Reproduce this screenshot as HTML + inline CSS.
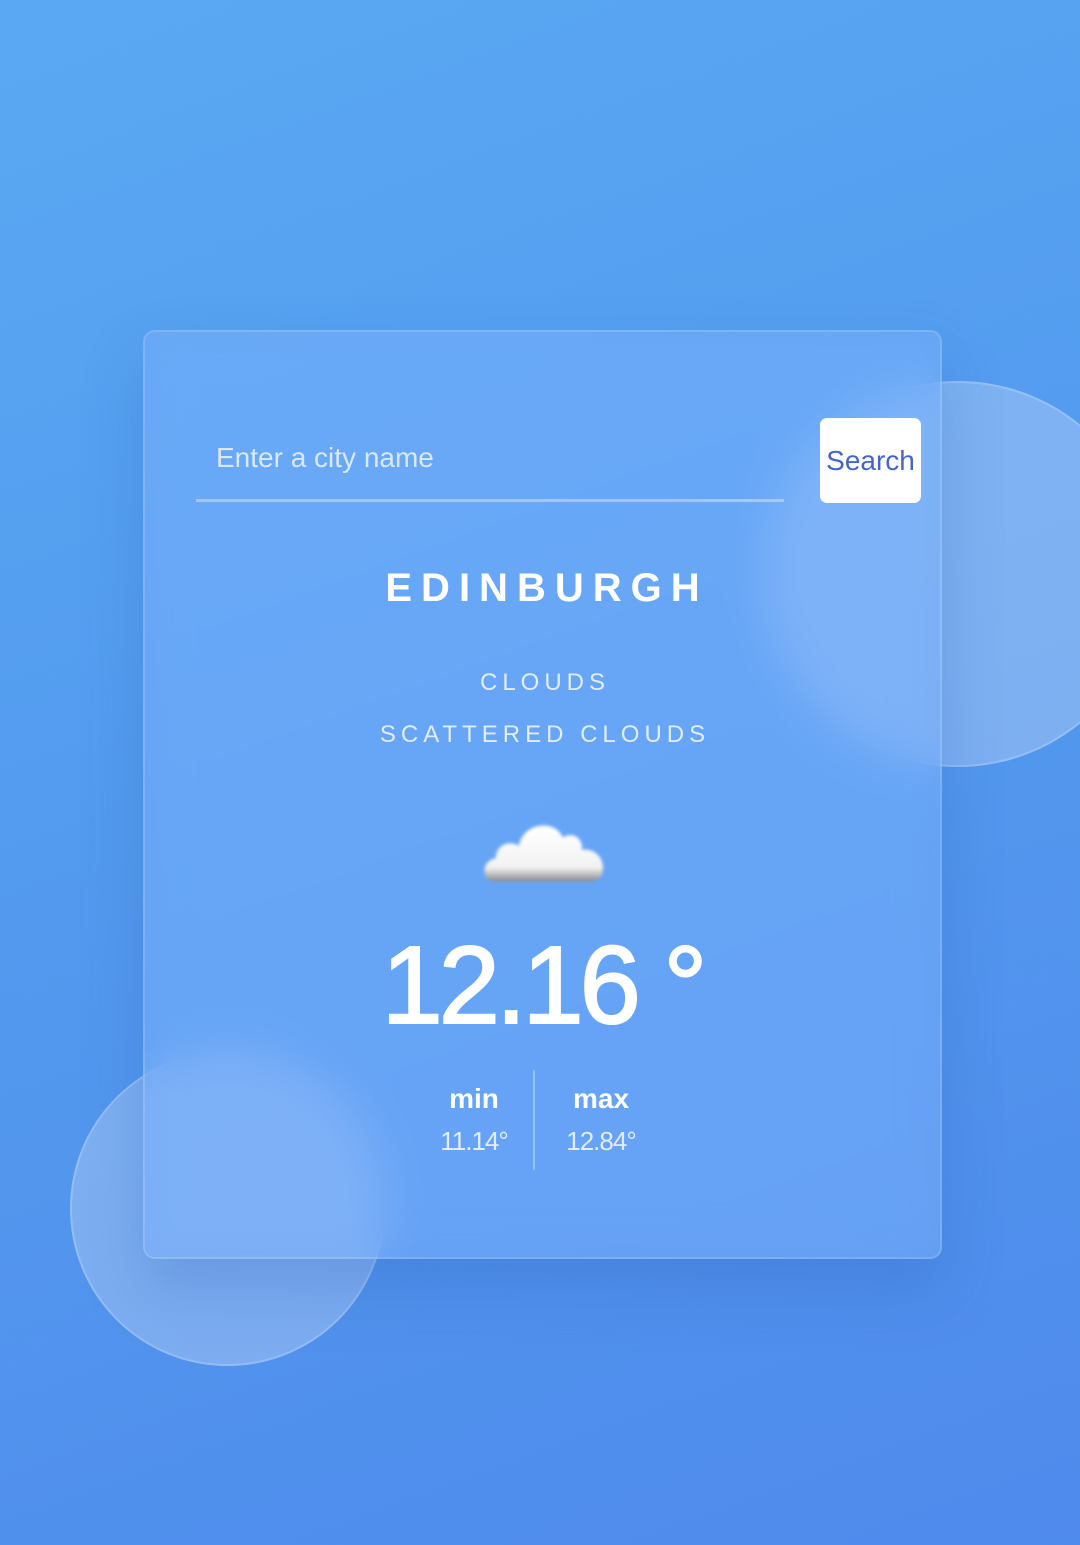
<!DOCTYPE html>
<html><head><meta charset="utf-8"><style>
*{margin:0;padding:0;box-sizing:border-box}
html,body{width:1080px;height:1545px;overflow:hidden}
body{background:linear-gradient(160deg,#5aa8f3 0%,#539bef 45%,#4f8aec 100%);font-family:"Liberation Sans",sans-serif;position:relative}
.c{position:absolute;border-radius:50%;background:rgba(185,210,245,0.42);border:2px solid rgba(255,255,255,0.18)}
.card{position:absolute;left:143px;top:330px;width:799px;height:929px;border-radius:12px;background:rgba(120,172,244,0.5);backdrop-filter:blur(22px) brightness(1.04);-webkit-backdrop-filter:blur(22px);border:2px solid rgba(255,255,255,0.15);box-shadow:0 30px 60px rgba(40,90,180,0.25)}
.in{position:absolute;left:-2px;top:-2px;width:799px;height:929px}
.t{position:absolute;left:0;width:799px;text-align:center;color:#fff}
</style></head><body>
<div class="c" style="left:765px;top:381px;width:386px;height:386px"></div>
<div class="c" style="left:70px;top:1051px;width:315px;height:315px"></div>
<div class="card"><div class="in">
  <div style="position:absolute;left:73px;top:112px;font-size:28px;color:#dbe8fa;font-weight:300">Enter a city name</div>
  <div style="position:absolute;left:53px;top:169px;width:588px;height:3px;background:rgba(200,220,250,0.6)"></div>
  <div style="position:absolute;left:677px;top:88px;width:101px;height:85px;background:#fff;border-radius:7px;color:#4565cc;font-size:28px;display:flex;align-items:center;justify-content:center">Search</div>
  <div class="t" style="top:236px;font-size:40px;font-weight:bold;letter-spacing:9px;text-indent:9px">EDINBURGH</div>
  <div class="t" style="top:339px;font-size:24px;letter-spacing:5px;text-indent:5px;color:#e2ecfa">CLOUDS</div>
  <div class="t" style="top:391px;font-size:24px;letter-spacing:5px;text-indent:5px;color:#e2ecfa">SCATTERED CLOUDS</div>
  <svg style="position:absolute;left:336px;top:484px" width="130" height="76" viewBox="0 0 124 72">
    <defs><filter id="b"><feGaussianBlur stdDeviation="1.5"/></filter>
    <linearGradient id="g" x1="0" y1="0" x2="0" y2="1"><stop offset="0" stop-color="#fff"/><stop offset="0.75" stop-color="#f2f2f2"/><stop offset="1" stop-color="#8a8a8a"/></linearGradient></defs>
    <path filter="url(#b)" fill="url(#g)" d="M14 64 C2 64 2 44 16 42 C16 30 28 24 38 30 C42 8 72 4 80 22 C90 16 100 24 98 34 C112 32 120 44 118 54 C117 62 112 64 106 64 Z"/>
  </svg>
  <div class="t" style="top:592px;font-size:110px;font-weight:normal;letter-spacing:-4px;-webkit-text-stroke:2px #fff">12.16 °</div>
  <div style="position:absolute;left:390px;top:740px;width:2px;height:100px;background:rgba(200,220,250,0.5)"></div>
  <div style="position:absolute;left:271px;top:753px;width:120px;text-align:center;color:#fff;font-weight:bold;font-size:28px">min</div>
  <div style="position:absolute;left:271px;top:796px;width:120px;text-align:center;color:#e2ecfa;font-size:26px;letter-spacing:-1px">11.14°</div>
  <div style="position:absolute;left:398px;top:753px;width:120px;text-align:center;color:#fff;font-weight:bold;font-size:28px">max</div>
  <div style="position:absolute;left:398px;top:796px;width:120px;text-align:center;color:#e2ecfa;font-size:26px;letter-spacing:-1px">12.84°</div>
</div></div>
</body></html>
